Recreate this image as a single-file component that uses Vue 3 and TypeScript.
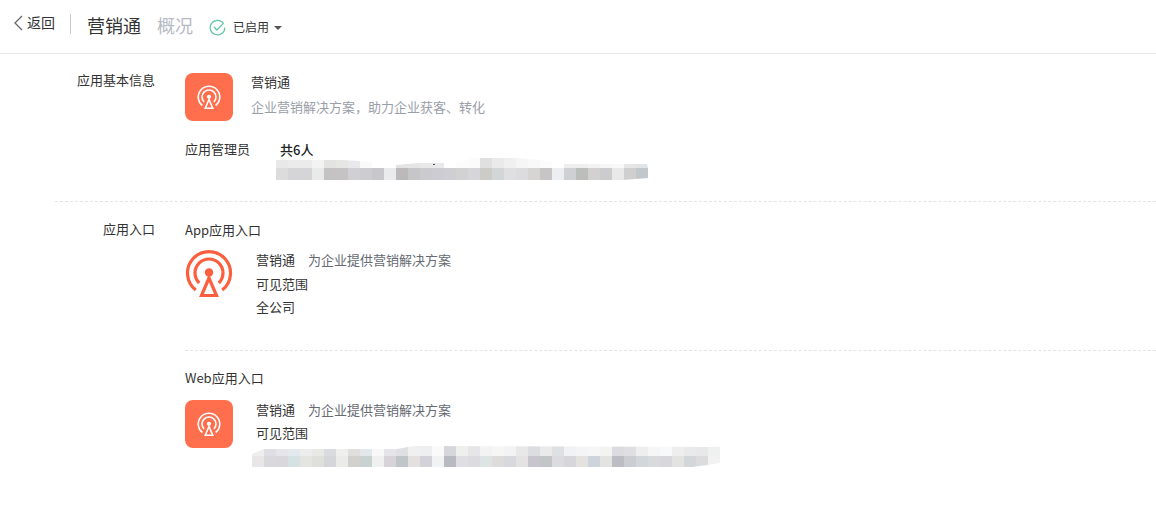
<script setup lang="ts">
type Mosaic = { top: string[]; bottom: string[] };

const adminMosaic: Mosaic = {
  top: ["e9e8e9","ebebeb","ebebec","f3f3f3","e3e3e1","e6e6e5","e9e9eb","fafafa","ffffff","ffffff","e3e3e3","e5e5e5","e8e8e8","e9e9ec","ffffff","fcfcfc","fbfbfb","e0e0e0","eaeaea","f0f0f0","f6f6f6","f9f9f9","fcfcfc","ffffff","eeeeee","eeeeee","f3f3f3","f6f6f6","f9f9f9","e6e6e6","e0e4e6"],
  bottom: ["dcdcdc","d5d5d7","d5d5d7","e9eaea","c4c2c2","c5c3c3","d0d0d4","cdccd0","c8c7cb","eaebed","bcb9ba","c6c5c7","cbcbcd","ccccd2","cfced3","d3d2d2","d6d6da","cccbc8","d2d6d6","dfdfe1","dcdcde","d6d5d4","c7c5c5","edeef1","cfd0d4","bcbebc","d3d0d1","cccbce","e9e9e9","d0cfcf","c2c7cc"],
};

const webMosaic: Mosaic = {
  top: ["eeeeee","dfdee5","e6e6ea","e3e9ec","ecedec","e8e8e6","dadbe0","eff0ee","e0dfde","e2e7e9","f8f8f8","e5e4e8","dee0e2","f0f0f0","eeeff1","fafafa","d6d7dc","eef0ee","e6e6e9","f3f3f3","f6f6f5","f3f3f6","e8e8e8","dcdde0","eaeaea","dfe0e3","f1f2f4","f4f4f6","f6f6f6","f3f3f1","dcdce0","dfdfe3","eeeeee","f6f6f6","f8f9fa","eeeeef","e9eaec","e8e8ea","eff1f0"],
  bottom: ["e8e6e6","d9d8dd","dad7da","d6e1e4","e4e5e1","dfdfdc","d5d6da","ebecea","d2d1ce","c8d2d0","f0f0f0","d8d3d8","bfc5c9","e3e0df","d3d2d8","f1f2f4","b9b9c1","dfdfe3","dcdce0","dee4e4","dddcdb","d8d9de","e4e2e2","c9c5ce","c2c6c6","dcdce0","d7d7da","e3e2df","cfd3dc","e3e3e1","bcbdc2","cccdd3","d2d7db","d9dadd","d8d8dc","e3e3e2","d3d7da","dcdbde","f2f2f2"],
};

// same antenna drawing everywhere, only size and colour change
const antennaPaths = [
  "M10.8 41A21.5 21.5 0 1 1 37.2 41",
  "M14.2 34A14 14 0 1 1 33.8 34",
  "M24 29 16.5 46.5h15Z",
];
</script>

<template>
  <div class="page">
    <header class="topbar">
      <a class="back">
        <svg class="chevron" width="10" height="16" viewBox="0 0 10 16" aria-hidden="true">
          <path d="M9 1 2 8l7 7" fill="none" stroke="#666" stroke-width="1.3" />
        </svg>
        返回
      </a>
      <span class="divider"></span>
      <span class="title">营销通</span>
      <span class="subtitle">概况</span>
      <svg class="status-icon" width="17" height="17" viewBox="0 0 17 17" aria-hidden="true">
        <path
          d="M14.6 4.6A7.3 7.3 0 1 0 15.8 8.5"
          fill="none"
          stroke="#62c6a2"
          stroke-width="1.2"
        />
        <path d="M5 8l3 3 6.4-6.6" fill="none" stroke="#62c6a2" stroke-width="1.3" />
      </svg>
      <span class="status">已启用</span>
      <span class="caret"></span>
    </header>

    <section class="row row-basic">
      <div class="label">应用基本信息</div>
      <div class="body">
        <div class="app-head">
          <div class="tile">
            <svg width="24" height="25" viewBox="0 0 48 50" aria-hidden="true">
              <g fill="none" stroke="#fff" stroke-width="3.2">
                <path v-for="d in antennaPaths" :key="d" :d="d" />
              </g>
              <circle cx="24" cy="23.5" r="4.2" fill="#fff" />
            </svg>
          </div>
          <div class="app-text">
            <div class="app-name">营销通</div>
            <div class="app-desc">企业营销解决方案，助力企业获客、转化</div>
          </div>
        </div>
        <div class="admins">
          <div class="admins-label">应用管理员</div>
          <div class="admins-body">
            <div class="admins-count">共6人</div>
            <div class="mosaic mosaic-admin">
              <div class="mosaic-row">
                <i v-for="(c, i) in adminMosaic.top" :key="i" :style="{ background: '#' + c }"></i>
              </div>
              <div class="mosaic-row">
                <i v-for="(c, i) in adminMosaic.bottom" :key="i" :style="{ background: '#' + c }"></i>
              </div>
              <span class="speck"></span>
            </div>
          </div>
        </div>
      </div>
    </section>

    <section class="row row-entry">
      <div class="label">应用入口</div>
      <div class="body">
        <div class="entry entry-app">
          <div class="entry-title">App应用入口</div>
          <div class="entry-main">
            <svg class="big-icon" width="48" height="50" viewBox="0 0 48 50" aria-hidden="true">
              <g fill="none" stroke="#fb5f3d" stroke-width="3.2">
                <path v-for="d in antennaPaths" :key="d" :d="d" />
              </g>
              <circle cx="24" cy="23.5" r="4.2" fill="#fb5f3d" />
            </svg>
            <div class="entry-lines">
              <div>营销通<span class="tagline">为企业提供营销解决方案</span></div>
              <div>可见范围</div>
              <div>全公司</div>
            </div>
          </div>
        </div>

        <div class="entry entry-web">
          <div class="entry-title">Web应用入口</div>
          <div class="entry-main">
            <div class="tile">
              <svg width="24" height="25" viewBox="0 0 48 50" aria-hidden="true">
                <g fill="none" stroke="#fff" stroke-width="3.2">
                  <path v-for="d in antennaPaths" :key="d" :d="d" />
                </g>
                <circle cx="24" cy="23.5" r="4.2" fill="#fff" />
              </svg>
            </div>
            <div class="entry-lines entry-lines-web">
              <div>营销通<span class="tagline">为企业提供营销解决方案</span></div>
              <div>可见范围</div>
              <div class="mosaic mosaic-web">
                <div class="mosaic-row">
                  <i v-for="(c, i) in webMosaic.top" :key="i" :style="{ background: '#' + c }"></i>
                </div>
                <div class="mosaic-row">
                  <i v-for="(c, i) in webMosaic.bottom" :key="i" :style="{ background: '#' + c }"></i>
                </div>
              </div>
            </div>
          </div>
        </div>
      </div>
    </section>
  </div>
</template>

<style>
html,
body {
  background: #fff;
  overflow: hidden;
}
</style>

<style scoped>
.page {
  width: 1156px;
  height: 517px;
  font-family: "Noto Sans CJK SC", "Noto Sans", sans-serif;
  font-size: 13px;
  color: #333;
  overflow: hidden;
}

.topbar {
  display: flex;
  align-items: center;
  height: 49px;
  padding: 0 0 4px 13px;
  border-bottom: 1px solid #e9e9ee;
  box-sizing: content-box;
}
.back {
  display: flex;
  align-items: center;
  gap: 4px;
  width: 57px;
  font-size: 14px;
  line-height: 20px;
  margin-top: -5px;
}
.chevron {
  margin-top: 2px;
}
.divider {
  width: 1px;
  height: 20px;
  background: #c8c8cc;
  margin-top: -1px;
  margin-right: 16px;
}
.title {
  font-size: 18px;
  margin-right: 16px;
}
.subtitle {
  font-size: 18px;
  color: #b6bac4;
  margin-right: 16px;
}
.status-icon {
  margin-right: 7px;
  margin-top: 6px;
}
.status {
  font-size: 12px;
  margin-top: 4px;
}
.caret {
  width: 0;
  height: 0;
  margin-left: 5px;
  margin-top: 7px;
  border-left: 4px solid transparent;
  border-right: 4px solid transparent;
  border-top: 4px solid #555;
}

.row {
  display: flex;
  margin-left: 55px;
}
.row-basic {
  height: 148px;
  padding-top: 19px;
  box-sizing: border-box;
  border-bottom: 1px dashed #e2e4e8;
}
.label {
  width: 100px;
  margin-right: 30px;
  margin-top: -2px;
  text-align: right;
  line-height: 18px;
}
.row-entry .label {
  margin-top: 18px;
}
.body {
  flex: 1;
}

.app-head {
  display: flex;
}
.tile {
  width: 48px;
  height: 48px;
  flex: none;
  display: flex;
  align-items: center;
  justify-content: center;
  border-radius: 8px;
  background: #ff6f4e;
}
.app-text {
  margin-left: 18px;
}
.app-name {
  line-height: 20px;
  margin-top: -1px;
}
.app-desc {
  line-height: 20px;
  margin-top: 5px;
  color: #9a9ea8;
}

.admins {
  display: flex;
  margin-top: 19px;
}
.admins-label {
  width: 95px;
  line-height: 18px;
}
.admins-count {
  line-height: 18px;
  margin-top: 1px;
  font-weight: 500;
  color: #222;
}

.mosaic {
  position: relative;
}
.mosaic-admin {
  margin: -1px 0 0 -4px;
  clip-path: polygon(
    0 2px, 67px 2px, 84px 3px, 120px 7px, 142px 5px, 168px 5px, 181px 3px, 204px 0,
    241px 0, 284px 4px, 287px 6px, 371px 6px, 372px 10px, 372px 20px, 347px 22px, 0 22px
  );
}
.speck {
  position: absolute;
  left: 157px;
  top: 6px;
  width: 2px;
  height: 1px;
  background: #5a4a4a;
}
.mosaic-row {
  display: flex;
}
.mosaic-row i {
  display: block;
  width: 12px;
  height: 12px;
  flex: none;
}
.mosaic-admin .mosaic-row:first-child i {
  height: 10px;
}
.mosaic-web .mosaic-row:first-child i {
  height: 10px;
}
.mosaic-web .mosaic-row:last-child i {
  height: 11px;
}

.entry-app {
  padding-top: 19px;
  height: 149px;
  box-sizing: border-box;
  border-bottom: 1px dashed #e2e4e8;
}
.entry-web {
  padding-top: 18px;
}
.entry-title {
  line-height: 18px;
}
.entry-main {
  display: flex;
  margin-top: 11px;
}
.entry-web .entry-main {
  margin-top: 13px;
}
.big-icon {
  flex: none;
  margin-top: -1px;
}
.entry-lines {
  margin-left: 23px;
  line-height: 23.5px;
  margin-top: -2px;
}
.entry-lines-web {
  margin-top: -2px;
  line-height: 23px;
}
.tagline {
  margin-left: 13px;
  color: #666a72;
}
.mosaic-web {
  margin: 2px 0 0 -4px;
  clip-path: polygon(
    0 8px, 12px 3px, 145px 3px, 161px 0, 468px 1px, 468px 17px, 455px 19px, 440px 21px, 0 21px
  );
}
</style>
